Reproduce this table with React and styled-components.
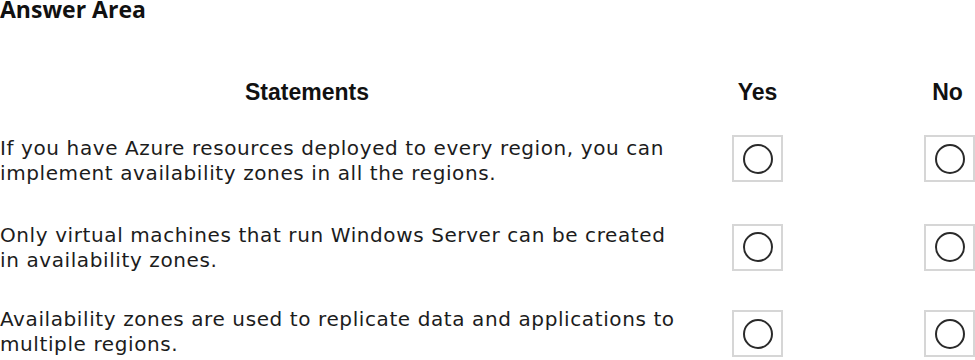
import React from "react";
import styled, { createGlobalStyle } from "styled-components";

const GlobalStyle = createGlobalStyle`
  html, body {
    margin: 0;
    padding: 0;
    background: #ffffff;
  }
`;

const Page = styled.div`
  width: 975px;
  height: 360px;
  overflow: hidden;
  background: #fff;
  color: #111;
`;

const Title = styled.h2`
  margin: 0;
  font-family: "Open Sans", "Liberation Sans", sans-serif;
  font-weight: 700;
  font-size: 23px;
  line-height: 19px;
  height: 19px;
  color: #111;
`;

const Table = styled.div`
  display: grid;
  grid-template-columns: 732px 51px 141px 51px;
  margin-top: 59.5px;
`;

const HeadCell = styled.div`
  font-family: "Liberation Sans", Arial, sans-serif;
  font-weight: 700;
  font-size: 23px;
  line-height: 26px;
  height: 56.5px;
  color: #111;
  grid-column: ${(p) => p.$col};
  padding-left: ${(p) => p.$indent || 0}px;
  margin-left: ${(p) => p.$shift || 0}px;
  text-align: ${(p) => (p.$indent ? "left" : "center")};
  white-space: nowrap;
`;

const Statement = styled.div`
  grid-column: 1;
  font-family: "DejaVu Sans", Verdana, sans-serif;
  font-size: 20px;
  letter-spacing: 0.6px;
  line-height: 25px;
  color: #1c1c1c;
  max-width: 690px;
  margin-top: ${(p) => p.$nudge}px;
  height: 87.5px;
`;

const Choice = styled.div`
  grid-column: ${(p) => p.$col};
  width: 51px;
  height: 47px;
  box-sizing: border-box;
  border: 2px solid #d6d6d6;
  display: flex;
  align-items: center;
  justify-content: center;
  background: #fff;
`;

const Circle = styled.span`
  width: 30px;
  height: 30px;
  box-sizing: border-box;
  border-radius: 50%;
  border: 2px solid #2a2a2a;
`;

const rows = [
  { text: "If you have Azure resources deployed to every region, you can implement availability zones in all the regions.", nudge: 1 },
  { text: "Only virtual machines that run Windows Server can be created in availability zones.", nudge: -1 },
  { text: "Availability zones are used to replicate data and applications to multiple regions.", nudge: -3 },
];

export default function App() {
  return (
    <Page>
      <GlobalStyle />
      <Title>Answer Area</Title>
      <Table>
        <HeadCell $col={1} $indent={245}>Statements</HeadCell>
        <HeadCell $col={2}>Yes</HeadCell>
        <HeadCell $col={4} $shift={-4}>No</HeadCell>
        {rows.map((row) => (
          <React.Fragment key={row.text}>
            <Statement $nudge={row.nudge}>{row.text}</Statement>
            <Choice $col={2}><Circle /></Choice>
            <Choice $col={4}><Circle /></Choice>
          </React.Fragment>
        ))}
      </Table>
    </Page>
  );
}
